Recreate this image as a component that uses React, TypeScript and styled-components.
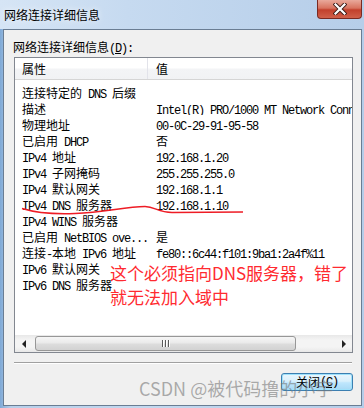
import styled, { createGlobalStyle } from "styled-components";

const Global = createGlobalStyle`
  html, body { margin: 0; padding: 0; background: #fff; }
  body { width: 364px; height: 408px; overflow: hidden; }
`;

const Window = styled.div`
  position: relative;
  width: 364px;
  height: 408px;
  display: flex;
  flex-direction: column;
  background: linear-gradient(to right, #7fa9d6 0%, #b7cfea 3%, #c3d8ef 40%, #b5cde9 100%);
  font-family: "Noto Sans CJK SC", sans-serif;
  overflow: hidden;
`;

const TitleBar = styled.div`
  height: 29px;
  display: flex;
  align-items: center;
  justify-content: space-between;
  padding-left: 4px;
  background: linear-gradient(to right, #d6e5f5 0%, #c6daf0 35%, #b6cee9 100%);
`;

const Title = styled.span`
  font-size: 12px;
  line-height: 16px;
  color: #000;
  text-shadow: 0 0 6px rgba(255, 255, 255, 0.9);
`;

const CloseBtn = styled.div`
  align-self: flex-start;
  width: 45px;
  height: 19px;
  margin-right: 2px;
  box-sizing: border-box;
  border: 1px solid #7a2a22;
  border-top: none;
  border-radius: 0 0 4px 4px;
  background: linear-gradient(#e9a99b 0%, #d8735f 45%, #c2402c 55%, #d0604a 100%);
  display: flex;
  align-items: center;
  justify-content: center;
`;

const Frame = styled.div`
  flex: 1;
  display: flex;
  padding: 0 2px 2px 3px;
`;

const Panel = styled.div`
  flex: 1;
  display: flex;
  flex-direction: column;
  border: 1px solid #6a7d93;
  background: #f0f0f0;
  padding: 0 8px 0 10px;
`;

const Label = styled.div`
  margin-top: 9px;
  height: 16px;
  line-height: 16px;
  font-size: 12px;
  margin-left: -1px;
`;

const Han = styled.span`
  font-family: "Noto Sans CJK SC", sans-serif;
  font-size: 12px;
  line-height: 16px;
`;

const Lat = styled.span`
  font-family: "Liberation Mono", monospace;
  font-size: 12px;
  line-height: 16px;
  letter-spacing: -1.2px;
`;

const ListBox = styled.div`
  margin-top: 2px;
  height: 296px;
  box-sizing: border-box;
  border: 1px solid #828790;
  background: #fff;
  display: flex;
  flex-direction: column;
  overflow: hidden;
`;

const Header = styled.div`
  height: 22px;
  flex: none;
  display: grid;
  grid-template-columns: 133px 1fr;
  background: linear-gradient(#ffffff 0%, #ffffff 45%, #f3f4f6 55%, #f1f2f4 100%);
  border-bottom: 1px solid #d5d5d5;
  box-sizing: border-box;
`;

const HeadCell = styled.div<{ $divider?: boolean }>`
  display: flex;
  align-items: center;
  padding-left: ${(p) => (p.$divider ? "7px" : "8px")};
  font-size: 12px;
  border-right: ${(p) => (p.$divider ? "1px solid #e2e3ea" : "none")};
`;

const Body = styled.div`
  flex: 1;
  padding-top: 3px;
  overflow: hidden;
`;

const Row = styled.div`
  height: 16px;
  display: grid;
  grid-template-columns: 133px 1fr;
  line-height: 16px;
  white-space: nowrap;
`;

const Cell = styled.div<{ $first?: boolean }>`
  padding-left: ${(p) => (p.$first ? "7px" : "8px")};
  overflow: hidden;
  color: #000;
`;

const HScroll = styled.div`
  height: 17px;
  flex: none;
  display: flex;
  align-items: stretch;
  background: linear-gradient(#e8e8e8, #f4f4f4 30%, #f4f4f4 70%, #e8e8e8);
`;

const Arrow = styled.div<{ $dir: "left" | "right" }>`
  width: 17px;
  display: flex;
  align-items: center;
  justify-content: center;
  &::before {
    content: "";
    border-top: 4px solid transparent;
    border-bottom: 4px solid transparent;
    ${(p) => (p.$dir === "left" ? "border-right: 4px solid #222;" : "border-left: 4px solid #222;")}
  }
`;

const Track = styled.div`
  flex: 1;
  display: flex;
  padding: 1px 0;
`;

const Thumb = styled.div`
  margin-left: 3px;
  width: 261px;
  box-sizing: border-box;
  border: 1px solid #979797;
  border-radius: 3px;
  background: linear-gradient(#f6f6f6 0%, #eaeaea 45%, #dcdcdc 55%, #d2d2d2 100%);
  display: flex;
  align-items: center;
  justify-content: center;
  gap: 2px;
`;

const Grip = styled.span`
  width: 1px;
  height: 7px;
  background: #5a5a5a;
  box-shadow: 1px 0 0 #fff;
`;

const Separator = styled.div`
  margin-top: 9px;
  margin-right: 1px;
  height: 0;
  border-top: 1px solid #a0a0a0;
  border-bottom: 1px solid #fff;
`;

const Footer = styled.div`
  margin-top: 9px;
  display: flex;
  justify-content: flex-end;
`;

const Button = styled.div`
  width: 72px;
  height: 18px;
  box-sizing: border-box;
  border: 1px solid #3c7fb1;
  border-radius: 3px;
  background: linear-gradient(#eaf6fd 0%, #d9f0fc 45%, #bee6fd 55%, #a7d9f5 100%);
  box-shadow: inset 0 0 0 1px #9fe1fb;
  display: flex;
  align-items: center;
  justify-content: center;
  font-size: 12px;
  line-height: 16px;
`;

const U = styled.span`
  text-decoration: underline;
`;

const Note = styled.div`
  position: absolute;
  left: 110px;
  top: 261px;
  font-size: 17px;
  line-height: 24px;
  color: #ff2a30;
  white-space: nowrap;
`;

const Curve = styled.svg`
  position: absolute;
  left: 0;
  top: 0;
  pointer-events: none;
`;

const Watermark = styled.div`
  position: absolute;
  left: 139px;
  top: 376px;
  font-size: 18px;
  line-height: 24px;
  color: rgba(120, 120, 120, 0.6);
  white-space: nowrap;
`;

const CJK = /([\u2e80-\u9fff\uff00-\uffef]+)/;

const mix = (s: string) =>
  s
    .split(CJK)
    .filter(Boolean)
    .map((p, i) => (CJK.test(p) ? <Han key={i}>{p}</Han> : <Lat key={i}>{p}</Lat>));

const rows: [string, string][] = [
  ["连接特定的 DNS 后缀", ""],
  ["描述", "Intel(R) PRO/1000 MT Network Connection"],
  ["物理地址", "00-0C-29-91-95-58"],
  ["已启用 DHCP", "否"],
  ["IPv4 地址", "192.168.1.20"],
  ["IPv4 子网掩码", "255.255.255.0"],
  ["IPv4 默认网关", "192.168.1.1"],
  ["IPv4 DNS 服务器", "192.168.1.10"],
  ["IPv4 WINS 服务器", ""],
  ["已启用 NetBIOS ove...", "是"],
  ["连接-本地 IPv6 地址", "fe80::6c44:f101:9ba1:2a4f%11"],
  ["IPv6 默认网关", ""],
  ["IPv6 DNS 服务器", ""],
];

export default function App() {
  return (
    <>
      <Global />
      <Window>
        <TitleBar>
          <Title>网络连接详细信息</Title>
          <CloseBtn>
            <svg width="14" height="12" viewBox="0 0 14 12">
              <path d="M2.5 1.5 L11.5 10.5 M11.5 1.5 L2.5 10.5" stroke="#3a1a16" strokeWidth="4" strokeLinecap="square" />
              <path d="M2.5 1.5 L11.5 10.5 M11.5 1.5 L2.5 10.5" stroke="#fff" strokeWidth="2.2" strokeLinecap="square" />
            </svg>
          </CloseBtn>
        </TitleBar>
        <Frame>
          <Panel>
            <Label>
              {mix("网络连接详细信息(")}
              <U>{mix("D")}</U>
              {mix("):")}
            </Label>
            <ListBox>
              <Header>
                <HeadCell $divider>属性</HeadCell>
                <HeadCell>值</HeadCell>
              </Header>
              <Body>
                {rows.map(([k, v]) => (
                  <Row key={k}>
                    <Cell $first>{mix(k)}</Cell>
                    <Cell>{mix(v)}</Cell>
                  </Row>
                ))}
              </Body>
              <HScroll>
                <Arrow $dir="left" />
                <Track>
                  <Thumb>
                    <Grip />
                    <Grip />
                    <Grip />
                  </Thumb>
                </Track>
                <Arrow $dir="right" />
              </HScroll>
            </ListBox>
            <Separator />
            <Footer>
              <Button>
                {mix("关闭(")}
                <U>{mix("C")}</U>
                {mix(")")}
              </Button>
            </Footer>
          </Panel>
        </Frame>
        <Curve width="364" height="408" viewBox="0 0 364 408">
          <path
            d="M22 208.5 C35 212.5 50 214.5 75 213.5 C105 212.5 125 206.5 145 206.5 C155 206.5 158 212.5 172 212.5 L243 212"
            fill="none"
            stroke="#ee1c25"
            strokeWidth="1.4"
          />
        </Curve>
        <Note>
          这个必须指向DNS服务器，错了
          <br />
          就无法加入域中
        </Note>
        <Watermark>CSDN @被代码撸的小宇</Watermark>
      </Window>
    </>
  );
}
